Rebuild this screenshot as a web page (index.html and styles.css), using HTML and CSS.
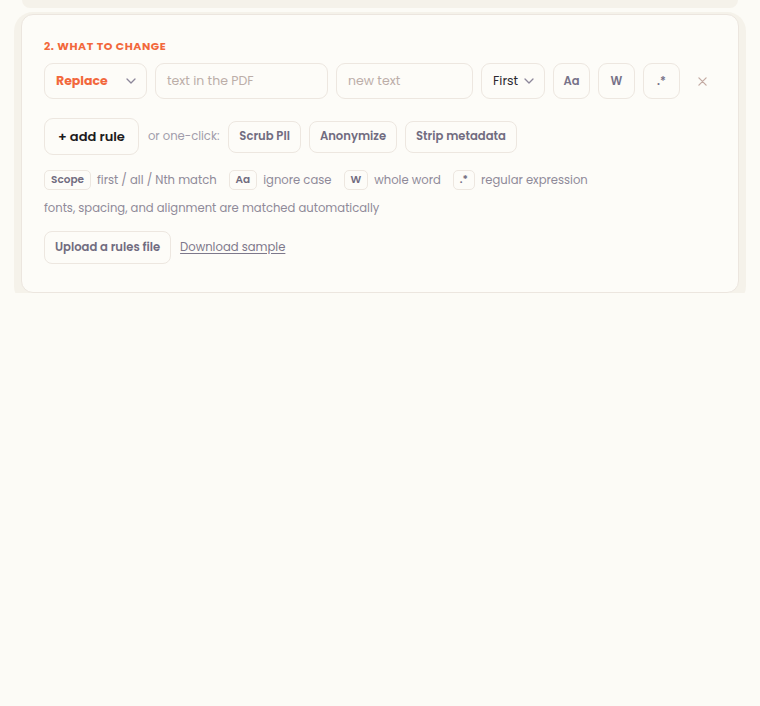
FILE: index.html
```html
<!DOCTYPE html>
<html lang="en">
<head>
<meta charset="utf-8">
<title>What to change</title>
<link rel="stylesheet" href="styles.css">
</head>
<body>
<div class="page">
  <div class="prev-step"></div>
  <section class="card">
    <h2 class="step-title">2. WHAT TO CHANGE</h2>

    <div class="rule-row">
      <div class="select select-action">
        <span>Replace</span>
        <svg class="chev" viewBox="0 0 10 6" width="10" height="6"><path d="M1 1l4 4 4-4" fill="none" stroke="currentColor" stroke-width="1.3" stroke-linecap="round" stroke-linejoin="round"/></svg>
      </div>
      <div class="field field-find">text in the PDF</div>
      <div class="field field-new">new text</div>
      <div class="select select-scope">
        <span>First</span>
        <svg class="chev" viewBox="0 0 10 6" width="10" height="6"><path d="M1 1l4 4 4-4" fill="none" stroke="currentColor" stroke-width="1.3" stroke-linecap="round" stroke-linejoin="round"/></svg>
      </div>
      <div class="toggle">Aa</div>
      <div class="toggle">W</div>
      <div class="toggle">.*</div>
      <div class="remove">
        <svg viewBox="0 0 10 10" width="9" height="9"><path d="M1 1l8 8M9 1l-8 8" fill="none" stroke="currentColor" stroke-width="1.4" stroke-linecap="round"/></svg>
      </div>
    </div>

    <div class="action-row">
      <button class="btn-add">+ add rule</button>
      <span class="muted">or one-click:</span>
      <button class="chip">Scrub PII</button>
      <button class="chip">Anonymize</button>
      <button class="chip">Strip metadata</button>
    </div>

    <div class="legend">
      <span class="key">Scope</span><span class="desc">first / all / Nth match</span>
      <span class="key">Aa</span><span class="desc">ignore case</span>
      <span class="key">W</span><span class="desc">whole word</span>
      <span class="key">.*</span><span class="desc">regular expression</span>
    </div>

    <p class="note">fonts, spacing, and alignment are matched automatically</p>

    <div class="file-row">
      <button class="chip chip-upload">Upload a rules file</button>
      <a class="link" href="#">Download sample</a>
    </div>
  </section>
</div>
</body>
</html>
```

FILE: styles.css
```css
* { box-sizing: border-box; }

html, body {
  margin: 0;
  padding: 0;
  background: #fcfbf6;
}

body {
  font-family: "Poppins", "Open Sans", "DejaVu Sans", sans-serif;
  color: #8a8694;
}

.page {
  padding: 0 21px;
}

.prev-step {
  height: 8px;
  margin: 0 1px;
  background: #f5f2ea;
  border-radius: 0 0 12px 12px;
}

.card {
  margin-top: 6px;
  background: #fdfcf8;
  border: 1px solid #ece6df;
  border-radius: 12px;
  box-shadow: 0 5px 0 7px #f5f2ea;
  padding: 23px 22px 28px;
}

.step-title {
  margin: 0 0 9px;
  font-size: 11px;
  font-weight: 700;
  letter-spacing: 0.55px;
  color: #f2683c;
  line-height: 16px;
}

.rule-row {
  display: flex;
  align-items: center;
  gap: 8px;
}

.select, .field, .toggle {
  flex-shrink: 0;
  height: 36px;
  border: 1px solid #ede7e0;
  border-radius: 9px;
  background: #fdfcf8;
  display: flex;
  align-items: center;
  font-size: 12.5px;
}

.select {
  justify-content: space-between;
  padding: 0 10px 0 11px;
}

.select-action {
  width: 103px;
  color: #f2683c;
  font-weight: 700;
}

.select-scope {
  width: 64px;
  color: #2b2930;
}

.chev { color: #8c879a; }

.field {
  padding: 0 11px;
  color: #bcaea8;
}

.field-find { width: 173px; }
.field-new { width: 137px; }

.toggle {
  width: 37px;
  justify-content: center;
  font-size: 11.5px;
  font-weight: 600;
  color: #777288;
}

.remove {
  flex-shrink: 0;
  width: 28px;
  display: flex;
  justify-content: center;
  color: #c4aba3;
}

.action-row {
  display: flex;
  align-items: center;
  gap: 8px;
  margin-top: 19px;
}

button {
  font-family: inherit;
  cursor: pointer;
}

.btn-add {
  height: 37px;
  padding: 0 13px;
  border: 1px solid #ede7e0;
  border-radius: 9px;
  background: #fdfcf8;
  font-size: 13px;
  font-weight: 600;
  color: #1d1b20;
}

.muted {
  font-size: 11.6px;
  color: #a19cab;
  margin: 0 1px;
}

.chip {
  height: 32px;
  padding: 0 10px;
  border: 1px solid #ede7e0;
  border-radius: 8px;
  background: #fdfcf8;
  font-size: 11.6px;
  font-weight: 600;
  color: #716c80;
}

.legend {
  display: flex;
  align-items: center;
  margin-top: 15px;
  font-size: 11.6px;
  color: #8f8a99;
}

.key {
  height: 20px;
  padding: 0 6px;
  display: inline-flex;
  align-items: center;
  border: 1px solid #ede7e0;
  border-radius: 5px;
  font-size: 10.5px;
  font-weight: 600;
  color: #716c80;
  margin-right: 6px;
}

.desc { margin-right: 12px; }

.note {
  margin: 9px 0 0;
  font-size: 11.6px;
  line-height: 18px;
  color: #8f8a99;
}

.file-row {
  display: flex;
  align-items: center;
  gap: 9px;
  margin-top: 14px;
}

.chip-upload { height: 33px; }

.link {
  font-size: 11.6px;
  color: #7d788b;
  text-decoration: underline;
  text-underline-offset: 2px;
}
```
